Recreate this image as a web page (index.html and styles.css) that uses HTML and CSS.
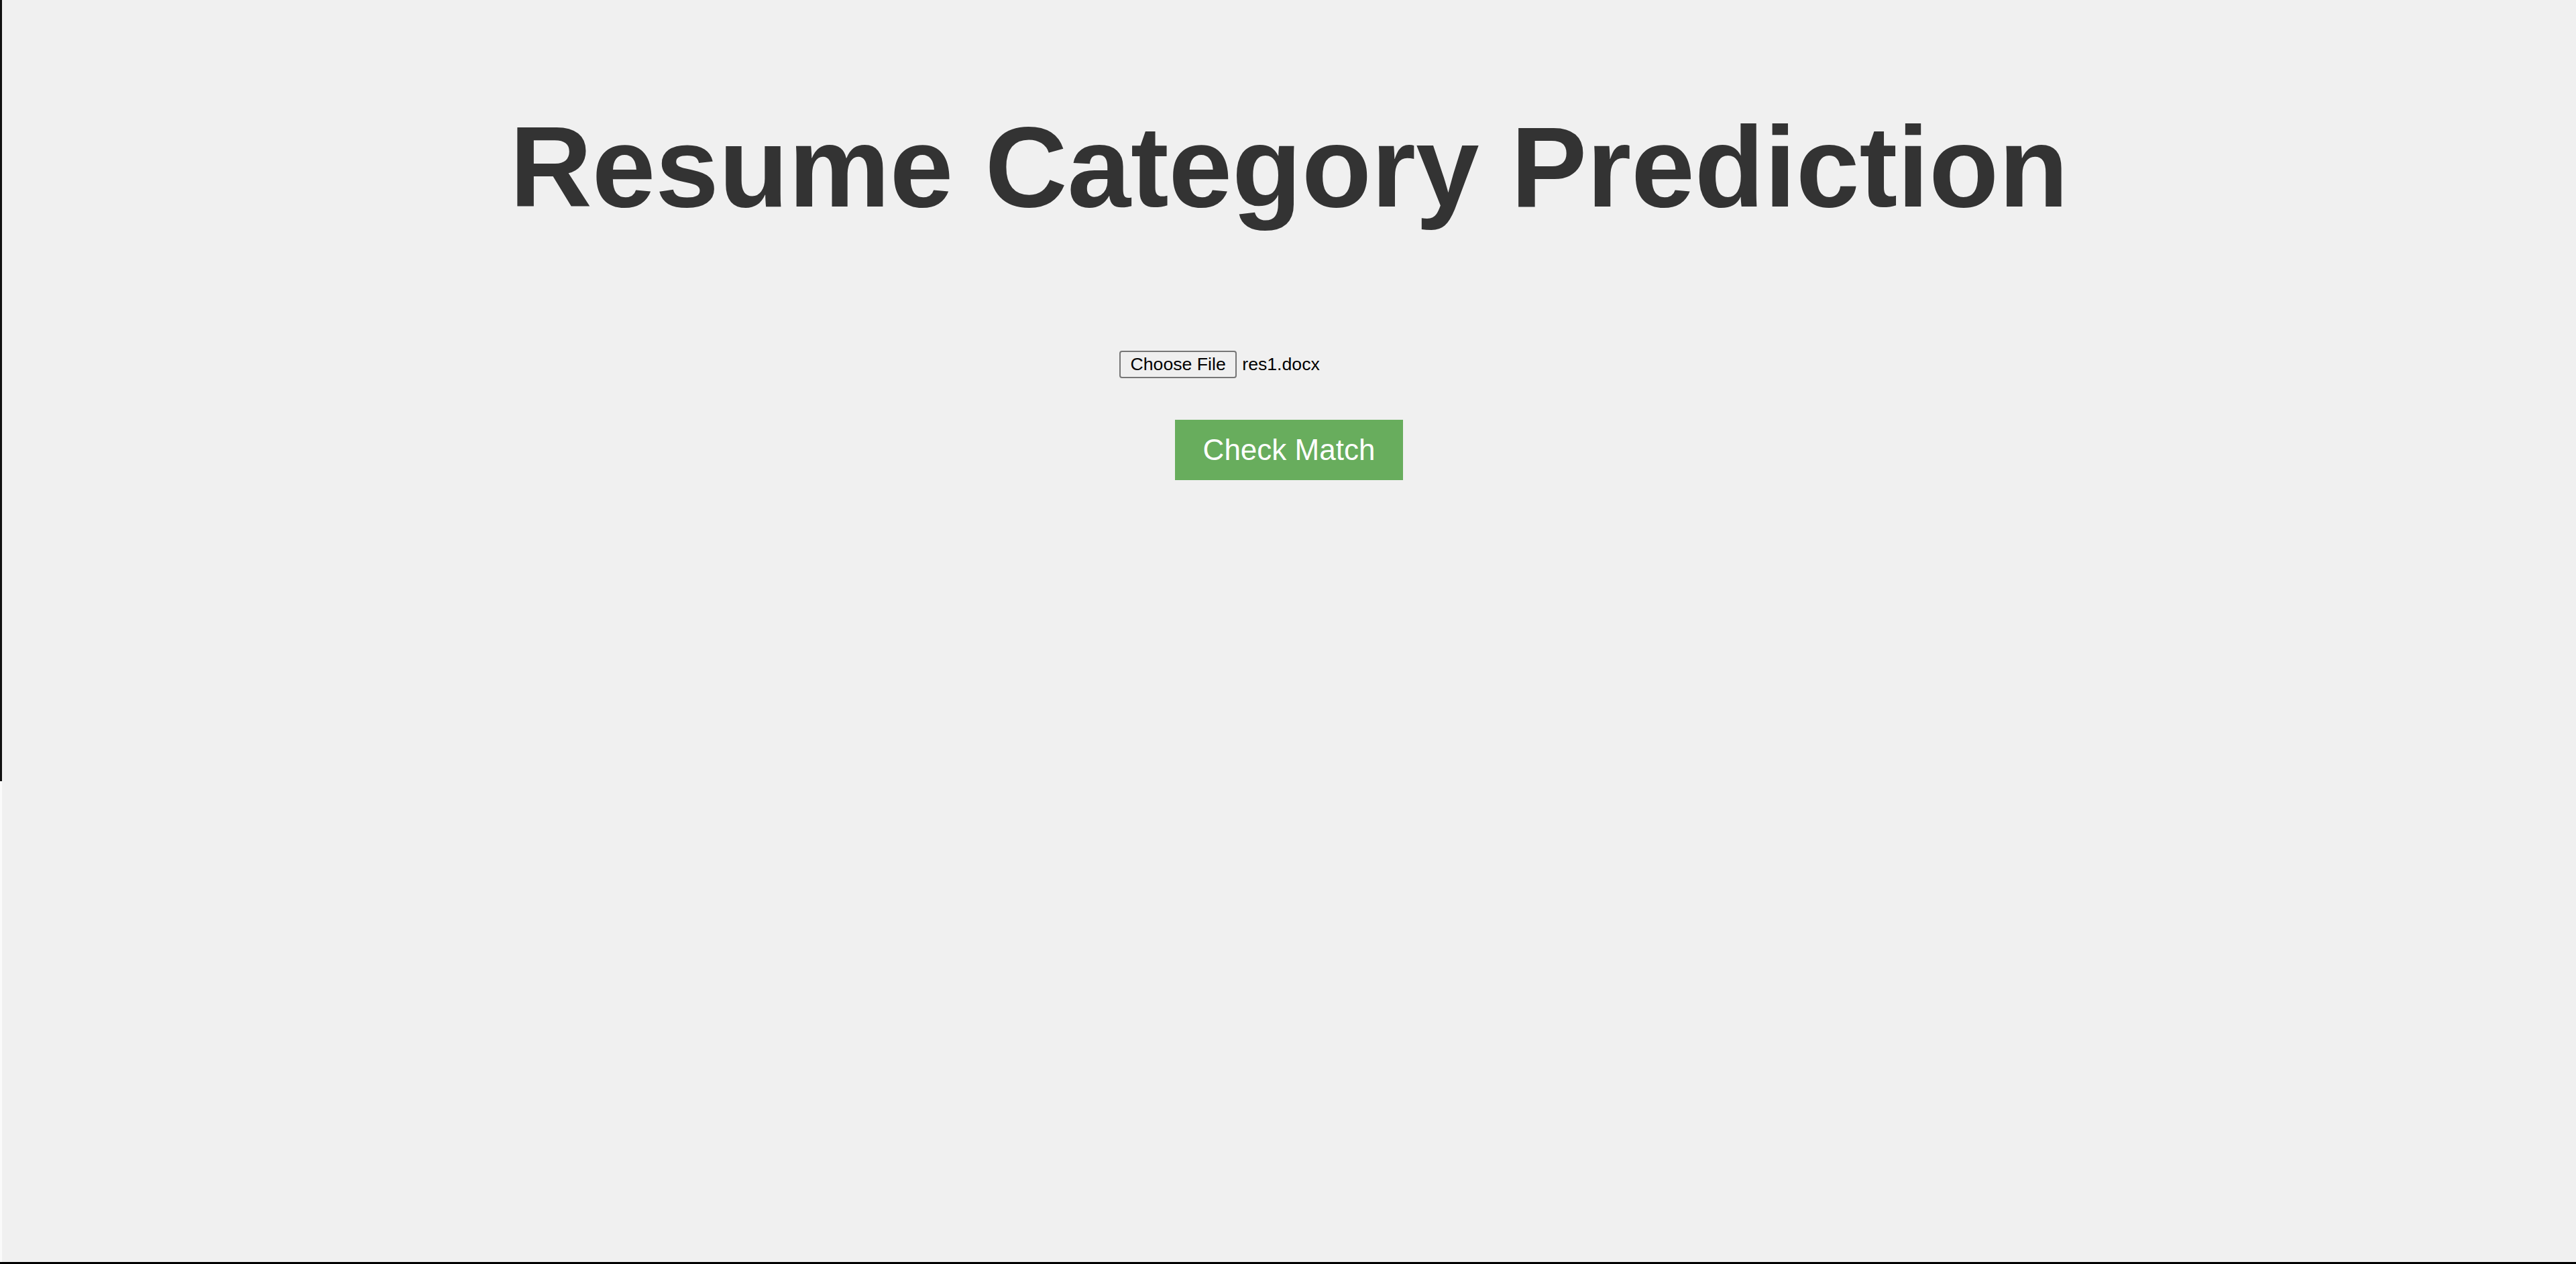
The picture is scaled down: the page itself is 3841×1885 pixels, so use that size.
FILE: index.html
```html
<!DOCTYPE html>
<html lang="en">
<head>
<meta charset="utf-8">
<title>Resume Category Prediction</title>
<link rel="stylesheet" href="styles.css">
</head>
<body>
<main class="page">
  <h1 class="title">Resume Category Prediction</h1>
  <form class="upload-form" action="#" method="post" enctype="multipart/form-data">
    <input class="file-input" type="file" id="resume" name="resume" accept=".pdf,.docx,.txt">
    <button class="submit-btn" type="submit">Check Match</button>
  </form>
</main>
<div class="filler"></div>
<script src="script.js"></script>
</body>
</html>
```

FILE: styles.css
```css
html {
  background: #f0f0f0;
}

body {
  margin: 0;
  min-height: 100vh;
  box-sizing: border-box;
  border-bottom: 3px solid #000;
  display: flex;
  flex-direction: column;
  font-family: "Liberation Sans", Arial, sans-serif;
  color: #333;
}

.page {
  flex: none;
  height: 1165px;
  box-sizing: border-box;
  border-left: 3px solid #111111;
  padding-top: 151px;
  text-align: center;
}

.filler {
  flex: 1;
  border-left: 3px solid #fafafa;
}

.title {
  margin: 0;
  font-size: 170px;
  line-height: 196px;
  font-weight: bold;
  color: #333;
}

.upload-form {
  margin-top: 176px;
  display: flex;
  flex-direction: column;
  align-items: center;
  gap: 62px;
}

.file-input {
  width: 506px;
  font-family: "Liberation Sans", Arial, sans-serif;
  font-size: 26.67px;
  color: #000;
  text-align: left;
  margin: 0;
}

.file-input::file-selector-button {
  font-family: "Liberation Sans", Arial, sans-serif;
  font-size: 26.67px;
  color: #000;
  background: #efefef;
  border: 2px solid #767676;
  border-radius: 4px;
  padding: 3px 14.5px;
  margin: 0 8px 0 0;
}

.submit-btn {
  margin: 0;
  border: none;
  background: #68ad5d;
  color: #fff;
  font-family: "Liberation Sans", Arial, sans-serif;
  font-size: 44px;
  line-height: 50px;
  padding: 20px 42px;
  cursor: pointer;
}
```

FILE: script.js
```js
(function () {
  var input = document.getElementById('resume');
  try {
    var dt = new DataTransfer();
    dt.items.add(new File([''], 'res1.docx', { type: 'application/vnd.openxmlformats-officedocument.wordprocessingml.document' }));
    input.files = dt.files;
  } catch (e) {}
})();
```
